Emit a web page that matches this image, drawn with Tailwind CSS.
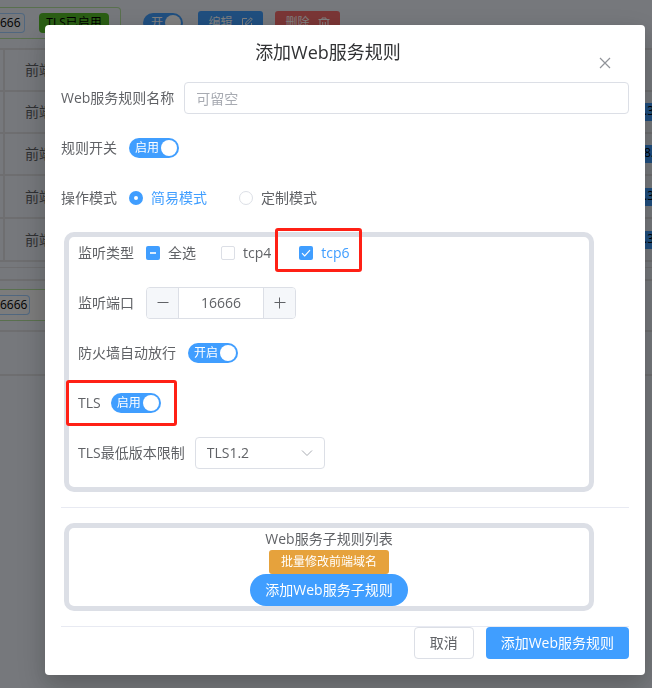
<!DOCTYPE html>
<html lang="zh-CN">
<head>
    <meta charset="UTF-8">
    <meta name="viewport" content="width=device-width, initial-scale=1.0">
    <title>添加Web服务规则</title>
    <script src="https://cdn.jsdelivr.net/npm/@tailwindcss/browser@4"></script>
</head>
<body class="bg-[#ecf1f8] font-['Open_Sans','Noto_Sans_CJK_SC',sans-serif] text-sm text-[#606266]">

    <!-- 规则列表页面 -->
    <main class="h-screen overflow-hidden">
        <div class="flex h-12 items-start pt-[7px]">
            <div class="flex h-8 w-[121px] items-center justify-between rounded-r border border-l-0 border-[#b3e19d] pr-[11px]">
                <span class="flex h-5 w-[25px] items-center rounded-r border border-l-0 border-[#a0cfff] text-xs text-black">666</span>
                <span class="flex h-5 w-[70px] items-center justify-center rounded bg-[#55bd28] text-xs text-black">TLS已启用</span>
            </div>
            <label class="mt-[6px] ml-[22px] flex h-5 w-10 items-center justify-between rounded-full bg-[#409eff] pr-[2px] pl-2 text-xs text-white">
                <input type="checkbox" class="sr-only" checked>
                <span>开</span>
                <span class="size-4 rounded-full bg-white"></span>
            </label>
            <button type="button" class="mt-1 ml-[15px] flex h-6 w-[65px] items-center justify-center gap-2 rounded-[3px] bg-[#409eff] text-xs text-white">
                编辑
                <svg class="size-3" viewBox="0 0 12 12" fill="none" stroke="currentColor"><path d="M6 1.5H1.5v9h9V6M4.5 7.5l.4-2L10 .8l1.3 1.3-4.8 5z"/></svg>
            </button>
            <button type="button" class="mt-1 ml-3 flex h-6 w-[65px] items-center justify-center gap-2 rounded-[3px] bg-[#f56c6c] text-xs text-white">
                删除
                <svg class="size-3" viewBox="0 0 12 12" fill="none" stroke="currentColor"><path d="M.5 2.5h11M4 2.500V1h4v1.500M2 2.500v8.500h8V2.500M4.700 5v3.500M7.300 5v3.500"/></svg>
            </button>
        </div>

        <table class="w-full border-collapse border-y-2 border-[#dcdde0]">
            <tbody>
                <tr class="h-[42px] border-b-2 border-[#dcdde0]">
                    <td class="w-1 border-r-2 border-[#dcdde0]"></td>
                    <td class="pl-5">前端</td>
                    <td></td>
                </tr>
                <tr class="h-[42px] border-b-2 border-[#dcdde0]">
                    <td class="border-r-2 border-[#dcdde0]"></td>
                    <td class="pl-5">前端</td>
                    <td><span class="ml-auto block h-[18px] w-2 bg-[#409eff] text-xs text-black">.3</span></td>
                </tr>
                <tr class="h-[42px] border-b-2 border-[#dcdde0]">
                    <td class="border-r-2 border-[#dcdde0]"></td>
                    <td class="pl-5">前端</td>
                    <td><span class="ml-auto block h-[18px] w-2 bg-[#409eff] text-xs text-black">8.</span></td>
                </tr>
                <tr class="h-[43px] border-b-2 border-[#dcdde0]">
                    <td class="border-r-2 border-[#dcdde0]"></td>
                    <td class="pl-5">前端</td>
                    <td><span class="ml-auto block h-[18px] w-2 bg-[#409eff] text-xs text-black">.3</span></td>
                </tr>
                <tr class="h-[43px] border-b-2 border-[#dcdde0]">
                    <td class="border-r-2 border-[#dcdde0]"></td>
                    <td class="pl-5">前端</td>
                    <td><span class="ml-auto block h-[18px] w-2 bg-[#409eff] text-xs text-black">.3</span></td>
                </tr>
            </tbody>
        </table>

        <div class="mt-[5px] h-[14px] border-t border-b-2 border-[#dcdde0]"></div>
        <div class="h-[51px] border-b-2 border-[#dcdde0] pt-2">
            <div class="flex h-8 w-1/2 items-center border-y border-[#b3e19d] bg-[#f8f8f8]">
                <span class="flex h-5 w-[30px] items-center rounded-r border border-l-0 border-[#a0cfff] text-xs text-black">6666</span>
            </div>
        </div>
        <div class="h-11 border-b-2 border-[#dcdde0]"></div>
    </main>

    <!-- 遮罩层 -->
    <div class="fixed inset-0 overflow-auto bg-black/50 pt-[25px] pr-[7px] pl-[45px]">
        <!-- 对话框 -->
        <div role="dialog" aria-labelledby="dialogTitle" class="relative rounded-sm bg-white p-4 shadow-[0_12px_32px_4px_rgba(0,0,0,0.12),0_8px_20px_rgba(0,0,0,0.12)]">
            <h2 id="dialogTitle" class="mr-[34px] pb-[18px] text-center text-lg leading-[23px] text-[#303133]">添加Web服务规则</h2>
            <button type="button" aria-label="关闭" class="absolute top-[14px] right-4 flex size-12 items-center justify-center text-[#909399]">
                <svg class="size-4" viewBox="0 0 16 16" fill="none" stroke="currentColor" stroke-width="1.2"><path d="M3 3l10 10M13 3L3 13"/></svg>
            </button>

            <form class="space-y-[18px]">
                <div class="flex h-8 items-center gap-[10px]">
                    <label for="ruleName">Web服务规则名称</label>
                    <input id="ruleName" type="text" placeholder="可留空" class="h-8 min-w-0 flex-1 rounded border border-[#dcdfe6] px-[11px] outline-none placeholder:text-[#a8abb2]">
                </div>

                <div class="flex h-8 items-center gap-3">
                    <label for="ruleSwitch">规则开关</label>
                    <label class="flex h-5 w-[50px] items-center justify-between rounded-full bg-[#dcdfe6] pr-[2px] pl-[6px] text-xs text-white has-checked:bg-[#409eff]">
                        <input id="ruleSwitch" type="checkbox" class="sr-only" checked>
                        <span>启用</span>
                        <span class="size-4 rounded-full bg-white"></span>
                    </label>
                </div>

                <div class="flex h-8 items-center gap-3">
                    <span>操作模式</span>
                    <div class="flex items-center gap-8">
                        <label class="flex items-center gap-2 has-checked:text-[#409eff]">
                            <input type="radio" name="mode" class="size-[14px] appearance-none rounded-full border border-[#dcdfe6] bg-white checked:border-5 checked:border-[#409eff]" checked>
                            简易模式
                        </label>
                        <label class="flex items-center gap-2 has-checked:text-[#409eff]">
                            <input type="radio" name="mode" class="size-[14px] appearance-none rounded-full border border-[#dcdfe6] bg-white checked:border-5 checked:border-[#409eff]">
                            定制模式
                        </label>
                    </div>
                </div>

                <!-- 监听设置 -->
                <div class="mr-[35px] ml-[3px] space-y-[18px] rounded-[10px] border-5 border-[#dcdfe6] px-[9px] pb-[18px]">
                    <div class="flex h-8 items-center">
                        <span class="mr-3">监听类型</span>
                        <label class="mr-[25px] flex items-center gap-2">
                            <span class="relative flex size-[14px]">
                                <input type="checkbox" class="size-[14px] appearance-none rounded-xs bg-[#409eff]">
                                <span class="absolute top-[6px] left-1 h-[2px] w-[6px] bg-white/80"></span>
                            </span>
                            全选
                        </label>
                        <label class="mr-7 flex items-center gap-2">
                            <input type="checkbox" class="size-[14px] appearance-none rounded-xs border border-[#dcdfe6] bg-white">
                            tcp4
                        </label>
                        <label class="relative flex h-8 items-center gap-2 text-[#409eff]">
                            <span class="relative flex size-[14px]">
                                <input type="checkbox" class="size-[14px] appearance-none rounded-xs bg-[#409eff]" checked>
                                <svg class="absolute inset-0 size-[14px]" viewBox="0 0 14 14" fill="none" stroke="white" stroke-width="1.2"><path d="M3 7.200l2.700 2.700L11 4.200"/></svg>
                            </span>
                            tcp6
                            <span class="absolute -top-[9px] -right-3 -bottom-[3px] -left-6 rounded-[3px] border-3 border-[#ff2015]"></span>
                        </label>
                    </div>

                    <div class="flex h-8 items-center gap-3">
                        <label for="listenPort">监听端口</label>
                        <div class="flex h-8 w-[150px] overflow-hidden rounded border border-[#dcdfe6]">
                            <button type="button" aria-label="减少" class="flex w-8 shrink-0 items-center justify-center border-r border-[#dcdfe6] bg-[#f5f7fa]">
                                <svg class="size-[14px]" viewBox="0 0 14 14" fill="none" stroke="currentColor"><path d="M1.500 6.500h11"/></svg>
                            </button>
                            <input id="listenPort" type="text" value="16666" class="w-full min-w-0 text-center outline-none">
                            <button type="button" aria-label="增加" class="flex w-8 shrink-0 items-center justify-center border-l border-[#dcdfe6] bg-[#f5f7fa]">
                                <svg class="size-[14px]" viewBox="0 0 14 14" fill="none" stroke="currentColor"><path d="M1.500 6.500h11M6.500 1.500v11"/></svg>
                            </button>
                        </div>
                    </div>

                    <div class="flex h-8 items-center gap-3">
                        <label for="firewallSwitch">防火墙自动放行</label>
                        <label class="flex h-5 w-[50px] items-center justify-between rounded-full bg-[#dcdfe6] pr-[2px] pl-[6px] text-xs text-white has-checked:bg-[#409eff]">
                            <input id="firewallSwitch" type="checkbox" class="sr-only" checked>
                            <span>开启</span>
                            <span class="size-4 rounded-full bg-white"></span>
                        </label>
                    </div>

                    <div class="relative flex h-8 w-fit items-center gap-[10px]">
                        <label for="tlsSwitch">TLS</label>
                        <label class="flex h-5 w-[50px] items-center justify-between rounded-full bg-[#dcdfe6] pr-[2px] pl-[6px] text-xs text-white has-checked:bg-[#409eff]">
                            <input id="tlsSwitch" type="checkbox" class="sr-only" checked>
                            <span>启用</span>
                            <span class="size-4 rounded-full bg-white"></span>
                        </label>
                        <span class="pointer-events-none absolute -top-[7px] -right-4 -bottom-[7px] -left-3 rounded-[3px] border-3 border-[#ff2015]"></span>
                    </div>

                    <div class="flex h-8 items-center gap-[10px]">
                        <label for="tlsVersion">TLS最低版本限制</label>
                        <div class="relative">
                            <select id="tlsVersion" class="block h-8 w-[130px] appearance-none rounded border border-[#dcdfe6] bg-white px-[11px] outline-none">
                                <option>TLS1.2</option>
                            </select>
                            <svg class="pointer-events-none absolute top-[9px] right-[11px] size-[14px] text-[#a8abb2]" viewBox="0 0 14 14" fill="none" stroke="currentColor"><path d="M2 4.500l5 5 5-5"/></svg>
                        </div>
                    </div>
                </div>
            </form>

            <hr class="my-[15px] border-[#e8eaf2]">

            <!-- 子规则列表 -->
            <div class="mr-[35px] ml-[3px] flex flex-col items-center rounded-[10px] border-5 border-[#dcdfe6]">
                <span class="leading-[22px]">Web服务子规则列表</span>
                <button type="button" class="h-6 rounded-[3px] bg-[#e6a23c] px-3 text-xs text-white">批量修改前端域名</button>
                <button type="button" class="h-8 rounded-full bg-[#409eff] px-[15px] text-white">添加Web服务子规则</button>
            </div>

            <hr class="mt-[15px] border-[#e8eaf2]">

            <div class="flex justify-end gap-3">
                <button type="button" class="h-8 rounded border border-[#dcdfe6] bg-white px-[15px]">取消</button>
                <button type="button" class="h-8 rounded bg-[#409eff] px-[15px] text-white">添加Web服务规则</button>
            </div>
        </div>
    </div>

</body>
</html>
